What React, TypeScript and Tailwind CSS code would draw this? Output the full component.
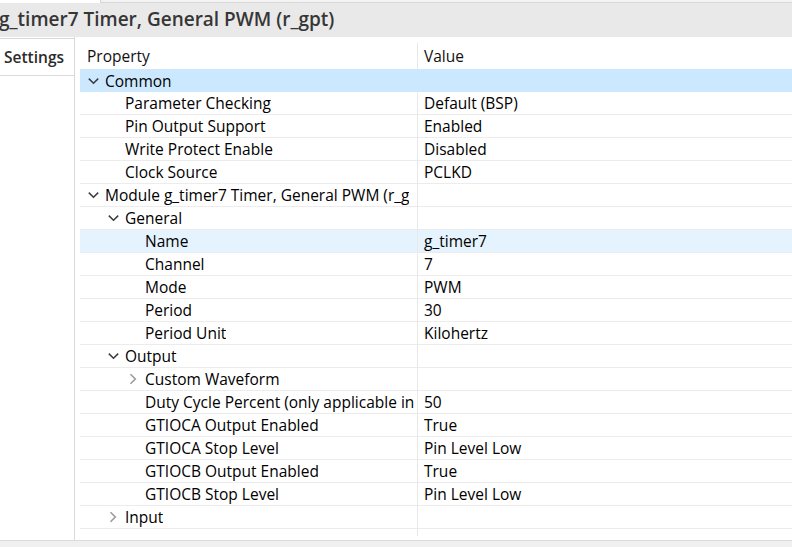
import React from "react";

type Row = {
  label: string;
  value?: string;
  level: number;
  chevron?: "down" | "right";
  state?: "selected" | "hover";
};

const rows: Row[] = [
  { label: "Common", level: 0, chevron: "down", state: "selected" },
  { label: "Parameter Checking", value: "Default (BSP)", level: 1 },
  { label: "Pin Output Support", value: "Enabled", level: 1 },
  { label: "Write Protect Enable", value: "Disabled", level: 1 },
  { label: "Clock Source", value: "PCLKD", level: 1 },
  { label: "Module g_timer7 Timer, General PWM (r_g", level: 0, chevron: "down" },
  { label: "General", level: 1, chevron: "down" },
  { label: "Name", value: "g_timer7", level: 2, state: "hover" },
  { label: "Channel", value: "7", level: 2 },
  { label: "Mode", value: "PWM", level: 2 },
  { label: "Period", value: "30", level: 2 },
  { label: "Period Unit", value: "Kilohertz", level: 2 },
  { label: "Output", level: 1, chevron: "down" },
  { label: "Custom Waveform", level: 2, chevron: "right" },
  { label: "Duty Cycle Percent (only applicable in", value: "50", level: 2 },
  { label: "GTIOCA Output Enabled", value: "True", level: 2 },
  { label: "GTIOCA Stop Level", value: "Pin Level Low", level: 2 },
  { label: "GTIOCB Output Enabled", value: "True", level: 2 },
  { label: "GTIOCB Stop Level", value: "Pin Level Low", level: 2 },
  { label: "Input", level: 1, chevron: "right" },
];

const indent = ["pl-[7px]", "pl-[27px]", "pl-[47px]"];

function Chevron({ dir }: { dir: "down" | "right" }) {
  if (dir === "down") {
    return (
      <svg width="13" height="12" viewBox="0 0 13 12" className="shrink-0">
        <path d="M1.8 3.6 L6.5 8.3 L11.2 3.6" fill="none" stroke="#3c3c3c" strokeWidth="1.5" />
      </svg>
    );
  }
  return (
    <svg width="13" height="12" viewBox="0 0 13 12" className="shrink-0">
      <path d="M3.5 1.2 L8.3 6 L3.5 10.8" fill="none" stroke="#9b9b9b" strokeWidth="1.6" />
    </svg>
  );
}

function TreeRow({ row }: { row: Row }) {
  const bg =
    row.state === "selected"
      ? "bg-[#cce8ff]"
      : row.state === "hover"
      ? "bg-[#e5f3ff]"
      : "bg-white";
  const divider = row.state === "selected" ? "" : "border-r border-[#e8e8e8]";
  return (
    <div className={`flex h-[23px] ${bg} ${row.state === "selected" ? "" : "border-b border-[#ececec]"}`}>
      <div className={`w-[338px] shrink-0 flex items-center overflow-hidden whitespace-nowrap ${indent[row.level]} ${divider}`}>
        <span className="w-[18px] shrink-0 flex items-center">
          {row.chevron && <Chevron dir={row.chevron} />}
        </span>
        <span className="leading-[22px] truncate">{row.label}</span>
      </div>
      <div className="flex-1 pl-[6px] leading-[22px] whitespace-nowrap">{row.value}</div>
    </div>
  );
}

export default function App() {
  return (
    <div
      className="w-[792px] h-[547px] overflow-hidden bg-white flex flex-col text-black text-[15.5px]"
      style={{ fontFamily: '"Open Sans", "Noto Sans", sans-serif' }}
    >
      {/* top strip */}
      <div className="h-[3px] flex shrink-0">
        <div className="w-[101px] bg-white border-r border-[#d6d6d6]" />
        <div className="flex-1 bg-[#f3f3f3] border-b border-[#d9d9d9]" />
      </div>

      {/* title bar */}
      <div className="h-[34px] shrink-0 bg-[#e9e9e9] flex items-center">
        <span className="text-[19px] font-semibold text-[#363636] whitespace-nowrap -ml-[1px] -mt-[1px]">
          g_timer7 Timer, General PWM (r_gpt)
        </span>
      </div>

      {/* body */}
      <div className="flex-1 flex min-h-0">
        <div className="w-[75px] shrink-0 flex flex-col border-r border-[#d9d9d9]">
          <div className="h-[38px] mt-[1px] border-t border-b border-[#dadada] flex items-center pl-[4px]">
            <span className="font-semibold text-[15.5px] text-[#2b2b2b] mt-[2px]">Settings</span>
          </div>
        </div>
        <div className="w-[5px] shrink-0" />
        <div className="flex-1 min-w-0 flex flex-col pt-[6px]">
          <div className="flex h-[26px] shrink-0">
            <div className="w-[338px] shrink-0 pl-[7px] leading-[26px] border-r border-[#e8e8e8] text-[#111]">
              Property
            </div>
            <div className="flex-1 pl-[6px] leading-[26px] text-[#111]">Value</div>
          </div>
          {rows.map((r, i) => (
            <TreeRow key={i} row={r} />
          ))}
          <div className="flex h-[7px]">
            <div className="w-[338px] shrink-0 border-r border-[#e8e8e8]" />
          </div>
        </div>
      </div>

      {/* bottom bar */}
      <div className="h-[7px] shrink-0 bg-[#f0f0f0] border-t border-[#dcdcdc]" />
    </div>
  );
}
